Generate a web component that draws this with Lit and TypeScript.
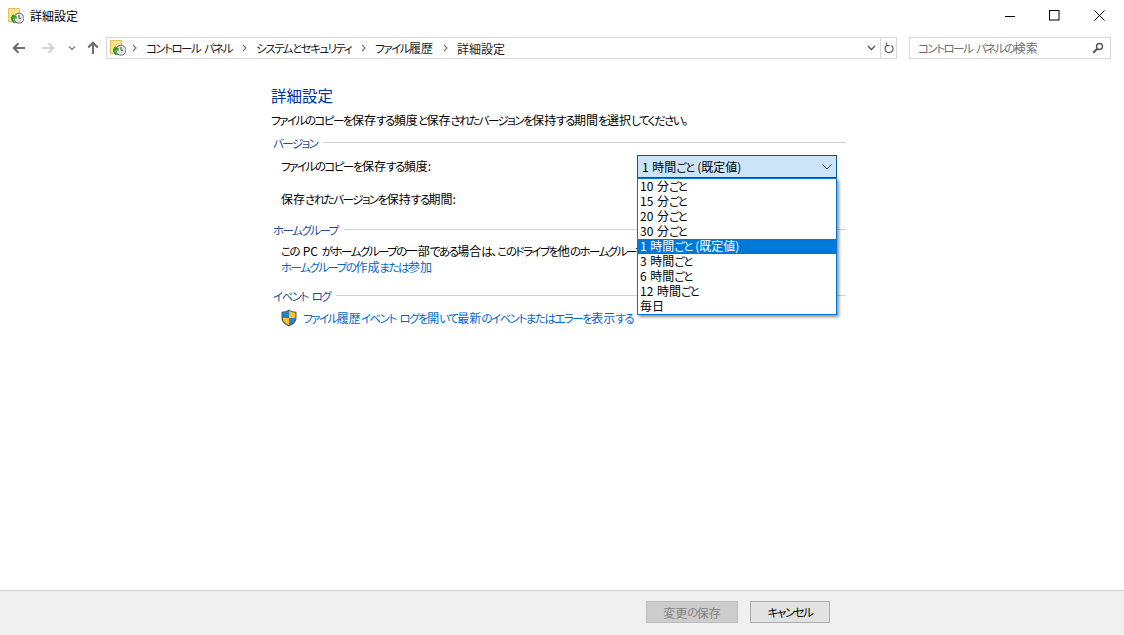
import { LitElement, html, css, svg } from "lit";
import { customElement } from "lit/decorators.js";

const histIcon = svg`
  <path d="M0.5 0.5H11.5V13.5H0.5Z" fill="#fbe28f" stroke="#e3c25a" stroke-width="1"/>
  <circle cx="11" cy="10.2" r="5" fill="#e4e4e4" stroke="#6f6f6f"/>
  <path d="M11 7V10.3H13.2" fill="none" stroke="#555" stroke-width="1"/>
  <path d="M2.8 9.5L5.5 5.6V7.4C7 7.2 8 8 8.6 8.6V11C8 10.2 7 10 5.5 10.2V12C6.5 13.5 7.5 14.2 9 15H5.5C4 14 3 12 2.8 9.5Z" fill="#2f9e2c"/>`;

const options = ["10 分ごと","15 分ごと","20 分ごと","30 分ごと","1 時間ごと (既定値)","3 時間ごと","6 時間ごと","12 時間ごと","毎日"];

/* Kana are set narrower than kanji, as the reference's UI font does. */
const t = (text: string) =>
  text.split(/([\u3040-\u30ff]+)/).map((part, i) => (i % 2 ? html`<span class="k">${part}</span>` : part));

const chevron = svg`<path d="M1 1L4 4L1 7" fill="none" stroke="#777" stroke-width="1.2"/>`;

@customElement("app-root")
export class AppRoot extends LitElement {
  static styles = css`
    :host { display: flex; flex-direction: column; width: 1124px; height: 635px; background: #fff; overflow: hidden;
      font-family: "Noto Sans CJK JP", "Liberation Sans", sans-serif; font-size: 12px; color: #000; font-feature-settings: "palt"; line-height: 15px; word-spacing: 1px; }
    .k { font-size: 11.5px; letter-spacing: -1.5px; }
    .title { display: flex; align-items: center; height: 31px; flex: none; padding-left: 8px; }
    .title svg.app { width: 16px; height: 16px; margin-right: 6px; }
    .title .name { flex: 1; }
    .wc { display: flex; width: 135px; margin-right: 2px; justify-content: space-between; align-items: center; }
    .wc button { all: unset; width: 45px; height: 31px; display: flex; align-items: center; justify-content: center; }
    .nav { display: flex; align-items: center; height: 22px; margin-top: 6px; flex: none; padding-left: 12px; }
    .nav svg { display: block; }
    .navbtns { display: flex; align-items: center; width: 94px; }
    .back { margin-right: 15px; } .fwd { margin-right: 13px; } .drop { margin-right: 11px; }
    .addr { width: 775px; height: 22px; box-sizing: border-box; border: 1px solid #d9d9d9; display: flex; align-items: center; padding-left: 3px; }
    .addr .crumb { margin: 0 10px 0 0; color: #1a1a1a; }
    .addr .sep { margin: 0 9px 0 0; }
    .addr .app { margin-right: 6px; }
    .addr .fill { flex: 1; }
    .addr .dd { margin-right: 4px; }
    .refresh { width: 16px; height: 22px; box-sizing: border-box; border: 1px solid #d9d9d9; border-left: none; display: flex; align-items: center; justify-content: center; }
    .search { margin-left: 12px; width: 202px; height: 22px; box-sizing: border-box; border: 1px solid #d9d9d9; display: flex; align-items: center; padding: 0 6px 0 8px; color: #6d6d6d; justify-content: space-between; }
    .content { flex: 1; padding: 26px 0 0 272px; width: 574px; }
    h1 { margin: 0 0 0 -1px; font-size: 15.5px; font-weight: 400; line-height: 20px; color: #003399; }
    .desc { margin: 6px 0 0 -1px; line-height: 18px; white-space: nowrap; }
    .sect { display: flex; align-items: center; gap: 6px; color: #2a4a9a; margin-top: 5px; height: 16px; }
    .sect i { flex: 1; height: 1px; background: #d2d2d2; }
    .sect span.l { margin-left: 1px; position: relative; top: 1px; }
    .body { padding-left: 9px; }
    .row { position: relative; display: flex; align-items: center; }
    .r1 { height: 24px; margin-top: 4px; }
    .r2 { height: 24px; margin-top: 9px; }
    .combo { position: absolute; left: 356px; top: 1px; width: 200px; height: 23px; box-sizing: border-box; border: 1px solid #005a9e; outline: 0; background: #cce4f7; display: flex; align-items: center; justify-content: space-between; padding: 0 4px; }
    .list { position: absolute; left: 356px; top: 24px; width: 200px; box-sizing: border-box; border: 1px solid #0078d7; background: #fff; box-shadow: 2px 2px 3px rgba(0,0,0,.45); z-index: 2; }
    .list div { height: 15px; line-height: 14px; padding-left: 2px; white-space: nowrap; }
    .list div.on { background: #0078d7; color: #fff; }
    .home { margin-top: 10px; }
    .t1 { margin-top: 6px; white-space: nowrap; line-height: 16px; width: 356px; overflow: hidden; }
    a { color: #0066cc; text-decoration: none; white-space: nowrap; display: block; line-height: 16px; }
    .ev { margin-top: 12px; }
    .evrow { display: flex; align-items: center; gap: 6px; margin-top: 5px; height: 20px; }
    .evrow svg { display: block; }
    .foot { flex: none; height: 45px; box-sizing: border-box; border-top: 1px solid #d0d0d0; background: #f0f0f0; display: flex; justify-content: flex-end; gap: 12px; padding: 10px 294px 0 0; }
    .btn { box-sizing: border-box; height: 22px; display: flex; align-items: center; justify-content: center; border: 1px solid #adadad; background: #e1e1e1; }
    .save { width: 92px; background: #cccccc; border-color: #bfbfbf; color: #838383; }
    .cancel { width: 80px; }
  `;

  render() {
    const sep = html`<svg class="sep" width="5" height="8">${chevron}</svg>`;
    return html`
      <div class="title">
        <svg class="app" viewBox="0 0 16 16">${histIcon}</svg>
        <span class="name">詳細設定</span>
        <div class="wc">
          <button><svg width="10" height="10"><path d="M0 5.5H10" stroke="#000"/></svg></button>
          <button><svg width="11" height="11"><rect x=".5" y=".5" width="9.5" height="9.5" fill="none" stroke="#000"/></svg></button>
          <button><svg width="11" height="11"><path d="M.5 .5L10.5 10.5M10.5 .5L.5 10.5" stroke="#000"/></svg></button>
        </div>
      </div>
      <div class="nav">
        <div class="navbtns">
          <svg class="back" width="14" height="12" viewBox="0 0 14 12"><path d="M13 6H2M6.5 1.2L1.7 6L6.5 10.8" fill="none" stroke="#6b6b6b" stroke-width="2"/></svg>
          <svg class="fwd" width="14" height="12" viewBox="0 0 14 12"><path d="M1 6H12M7.5 1.2L12.3 6L7.5 10.8" fill="none" stroke="#d2d2d2" stroke-width="2"/></svg>
          <svg class="drop" width="8" height="6" viewBox="0 0 8 6"><path d="M1 1.5L4 4.5L7 1.5" fill="none" stroke="#8a8a8a" stroke-width="1.5"/></svg>
          <svg width="12" height="14" viewBox="0 0 12 14"><path d="M6 13V2M1.2 6.5L6 1.7L10.8 6.5" fill="none" stroke="#6b6b6b" stroke-width="2"/></svg>
        </div>
        <div class="addr">
          <svg class="app" width="16" height="16" viewBox="0 0 16 16">${histIcon}</svg>
          ${sep}
          <span class="crumb">${t("コントロール パネル")}</span>
          ${sep}
          <span class="crumb">${t("システムとセキュリティ")}</span>
          ${sep}
          <span class="crumb">${t("ファイル履歴")}</span>
          ${sep}
          <span class="crumb">詳細設定</span>
          <span class="fill"></span>
          <svg class="dd" width="9" height="6" viewBox="0 0 9 6"><path d="M1 1L4.5 4.5L8 1" fill="none" stroke="#555" stroke-width="1.4"/></svg>
        </div>
        <div class="refresh">
          <svg width="10" height="12" viewBox="0 0 10 12"><path d="M3 3.2A4 4 0 1 0 7.5 3.5M2.5 .5V3.7H5.7" fill="none" stroke="#666" stroke-width="1.3"/></svg>
        </div>
        <div class="search">
          <span>${t("コントロール パネルの検索")}</span>
          <svg width="12" height="12" viewBox="0 0 12 12"><circle cx="7.5" cy="4.5" r="3" fill="none" stroke="#555" stroke-width="1.4"/><path d="M5.2 6.8L1.2 10.8" stroke="#555" stroke-width="2"/></svg>
        </div>
      </div>
      <div class="content">
        <h1>詳細設定</h1>
        <div class="desc">${t("ファイルのコピーを保存する頻度と保存されたバージョンを保持する期間を選択してください。")}</div>
        <div class="sect"><span class="l">${t("バージョン")}</span><i></i></div>
        <div class="body">
          <div class="row r1">
            <span>${t("ファイルのコピーを保存する頻度:")}</span>
            <div class="combo"><span>${t("1 時間ごと (既定値)")}</span>
              <svg width="10" height="6" viewBox="0 0 10 6"><path d="M.5 .5L5 5L9.5 .5" fill="none" stroke="#444"/></svg></div>
            <div class="list">${options.map((o, i) => html`<div class=${i === 4 ? "on" : ""}>${t(o)}</div>`)}</div>
          </div>
          <div class="row r2"><span>${t("保存されたバージョンを保持する期間:")}</span></div>
        </div>
        <div class="sect home"><span class="l">${t("ホームグループ")}</span><i></i></div>
        <div class="body">
          <div class="t1">${t("この PC がホームグループの一部である場合は、このドライブを他のホームグループ")}</div>
          <a>${t("ホームグループの作成または参加")}</a>
        </div>
        <div class="sect ev"><span class="l">${t("イベント ログ")}</span><i></i></div>
        <div class="body">
          <div class="evrow">
            <svg width="16" height="18" viewBox="0 0 16 18">
              <path d="M8 .5C10 2 13 2.7 15.5 2.7V9C15.5 13 12 16 8 17.5C4 16 .5 13 .5 9V2.7C3 2.7 6 2 8 .5Z" fill="#4a5a6a"/>
              <path d="M8 1.8V9H1.6V3.7C3.8 3.5 6 3 8 1.8Z" fill="#2f7fd0"/>
              <path d="M8 1.8C10 3 12.2 3.5 14.4 3.7V9H8Z" fill="#f6c425"/>
              <path d="M8 9H1.6C1.8 12 4.5 14.8 8 16.2Z" fill="#f6c425"/>
              <path d="M8 9H14.4C14.2 12 11.5 14.8 8 16.2Z" fill="#2f7fd0"/>
            </svg>
            <a>${t("ファイル履歴イベント ログを開いて最新のイベントまたはエラーを表示する")}</a>
          </div>
        </div>
      </div>
      <div class="foot">
        <div class="btn save">${t("変更の保存")}</div>
        <div class="btn cancel">${t("キャンセル")}</div>
      </div>
    `;
  }
}
